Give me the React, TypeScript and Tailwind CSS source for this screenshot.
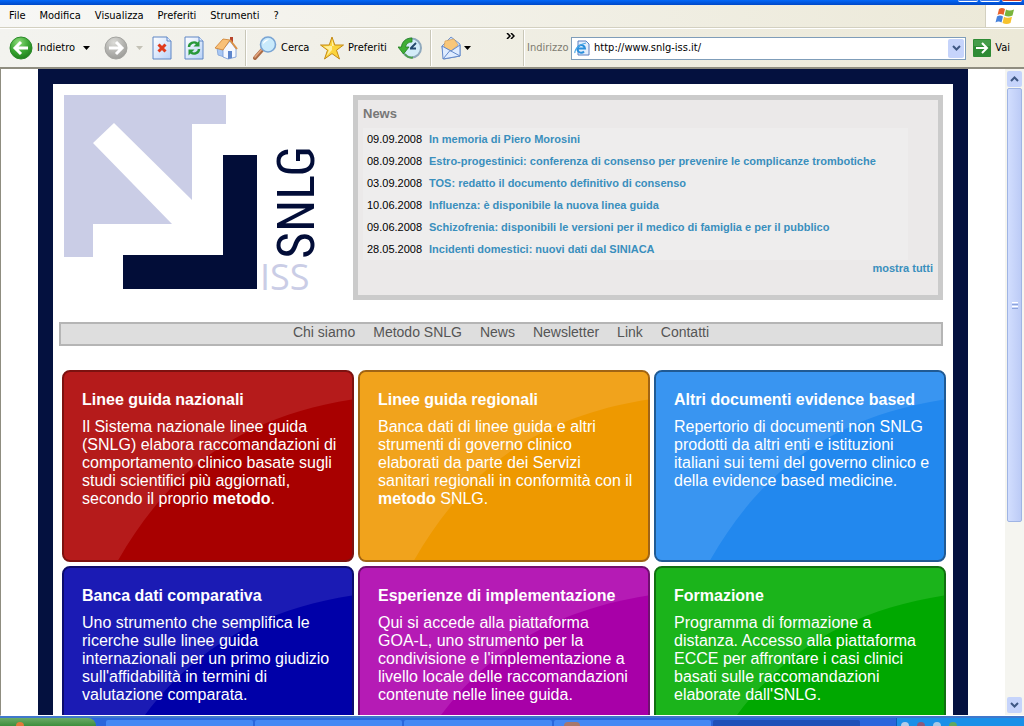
import type { ReactNode } from "react";

const menu = ["File", "Modifica", "Visualizza", "Preferiti", "Strumenti", "?"];

const news = [
  { date: "09.09.2008", title: "In memoria di Piero Morosini" },
  { date: "08.09.2008", title: "Estro-progestinici: conferenza di consenso per prevenire le complicanze trombotiche" },
  { date: "03.09.2008", title: "TOS: redatto il documento definitivo di consenso" },
  { date: "10.06.2008", title: "Influenza: è disponibile la nuova linea guida" },
  { date: "09.06.2008", title: "Schizofrenia: disponibili le versioni per il medico di famiglia e per il pubblico" },
  { date: "28.05.2008", title: "Incidenti domestici: nuovi dati dal SINIACA" },
];

const links = ["Chi siamo", "Metodo SNLG", "News", "Newsletter", "Link", "Contatti"];

const cards = [
  {
    title: "Linee guida nazionali",
    box: "bg-[#a80000] border-[#7c1210]",
    shine: "fill-[#b51b1b]",
    text: (
      <>
        Il Sistema nazionale linee guida<br />
        (SNLG) elabora raccomandazioni di<br />
        comportamento clinico basate sugli<br />
        studi scientifici più aggiornati,<br />
        secondo il proprio <a href="#" className="font-bold">metodo</a>.
      </>
    ),
  },
  {
    title: "Linee guida regionali",
    box: "bg-[#ee9900] border-[#a06414]",
    shine: "fill-[#f1a31c]",
    text: (
      <>
        Banca dati di linee guida e altri<br />
        strumenti di governo clinico<br />
        elaborati da parte dei Servizi<br />
        sanitari regionali in conformità con il<br />
        <a href="#" className="font-bold">metodo</a> SNLG.
      </>
    ),
  },
  {
    title: "Altri documenti evidence based",
    box: "bg-[#2288ee] border-[#205a94]",
    shine: "fill-[#3995f1]",
    text: (
      <>
        Repertorio di documenti non SNLG<br />
        prodotti da altri enti e istituzioni<br />
        italiani sui temi del governo clinico e<br />
        della evidence based medicine.
      </>
    ),
  },
  {
    title: "Banca dati comparativa",
    box: "bg-[#0000a8] border-[#0c0c6c]",
    shine: "fill-[#1b1bb4]",
    text: (
      <>
        Uno strumento che semplifica le<br />
        ricerche sulle linee guida<br />
        internazionali per un primo giudizio<br />
        sull'affidabilità in termini di<br />
        valutazione comparata.
      </>
    ),
  },
  {
    title: "Esperienze di implementazione",
    box: "bg-[#a800a8] border-[#701070]",
    shine: "fill-[#b51bb5]",
    text: (
      <>
        Qui si accede alla piattaforma<br />
        GOA-L, uno strumento per la<br />
        condivisione e l'implementazione a<br />
        livello locale delle raccomandazioni<br />
        contenute nelle linee guida.
      </>
    ),
  },
  {
    title: "Formazione",
    box: "bg-[#00a800] border-[#107010]",
    shine: "fill-[#1bb41b]",
    text: (
      <>
        Programma di formazione a<br />
        distanza. Accesso alla piattaforma<br />
        ECCE per affrontare i casi clinici<br />
        basati sulle raccomandazioni<br />
        elaborate dall'SNLG.
      </>
    ),
  },
];

function Caret({ className = "" }: { className?: string }) {
  return (
    <svg viewBox="0 0 7 4" className={`w-[7px] h-1 shrink-0 ${className}`}>
      <path d="M0 0h7L3.5 4z" fill="currentColor" />
    </svg>
  );
}

function RoundArrow({ forward = false }: { forward?: boolean }) {
  return (
    <svg viewBox="0 0 24 24" className="size-6 shrink-0">
      <defs>
        <radialGradient id={forward ? "fwd" : "back"} cx="0.4" cy="0.25" r="0.8">
          <stop offset="0" stopColor={forward ? "#dcdcd8" : "#8fdc7c"} />
          <stop offset="0.55" stopColor={forward ? "#b4b4b0" : "#3aa632"} />
          <stop offset="1" stopColor={forward ? "#9a9a96" : "#1c7a1a"} />
        </radialGradient>
      </defs>
      <circle cx="12" cy="12" r="11" fill={`url(#${forward ? "fwd" : "back"})`} stroke={forward ? "#a4a4a0" : "#2c8a2a"} />
      <path
        d={forward ? "M5 12h13M12 6l6 6-6 6" : "M19 12H6M12 6l-6 6 6 6"}
        fill="none"
        stroke="#fff"
        strokeWidth="3"
      />
    </svg>
  );
}

function Sheet({ children }: { children: ReactNode }) {
  return (
    <svg viewBox="0 0 20 24" className="w-5 h-6 shrink-0">
      <defs>
        <linearGradient id="sheet" x1="0" y1="0" x2="1" y2="1">
          <stop offset="0" stopColor="#fff" />
          <stop offset="1" stopColor="#b9d2f8" />
        </linearGradient>
      </defs>
      <path d="M1 1h14l4 4v18H1z" fill="url(#sheet)" stroke="#5f86c4" />
      <path d="M15 1v4h4" fill="#dce9ff" stroke="#5f86c4" />
      {children}
    </svg>
  );
}

function HomeIcon() {
  return (
    <svg viewBox="0 0 24 24" className="size-6 shrink-0">
      <path d="M16 1h3v6h-3z" fill="#b8452c" />
      <path d="M3 12l5-5 6 6v9l-10-3z" fill="#a9c8f4" stroke="#7d9fd6" strokeWidth="0.8" />
      <path d="M9 13l7-8 6 8v8l-8 2-5-2z" fill="#f4f8ff" stroke="#6f94d4" strokeWidth="0.8" />
      <path d="M9 3l7 1-7 10-8-2z" fill="#f8c078" stroke="#cd7d2c" strokeWidth="0.8" />
      <path d="M16 4l7 9" stroke="#dc9145" strokeWidth="2" />
      <path d="M14 15h4v7l-4 1z" fill="#5d86cc" />
    </svg>
  );
}

function SearchIcon() {
  return (
    <svg viewBox="0 0 24 24" className="size-6 shrink-0">
      <path d="M2 22l8-9" stroke="#ab6b45" strokeWidth="4" strokeLinecap="round" />
      <path d="M2 21l7-8" stroke="#e5a67f" strokeWidth="1.5" strokeLinecap="round" />
      <circle cx="15" cy="8.5" r="7.5" fill="#c9eafb" stroke="#79a4d3" strokeWidth="1.6" />
      <path d="M10 8c0-3 3-5 6-4.500-2 1-4 2.500-6 4.500z" fill="#fff" />
    </svg>
  );
}

function StarIcon() {
  return (
    <svg viewBox="0 0 24 24" className="size-6 shrink-0">
      <path d="M12 1l2.8 8h8.700l-7 5.200L19.500 23 12 17.600 4.500 23l3-8.800L.5 9h8.700z" fill="#fbd43c" stroke="#c48a16" />
      <path d="M12 3.500l1.900 6.600h-3.800L3.500 10.500l5.500 3.500-2.500 6L12 14z" fill="#fff0a0" />
    </svg>
  );
}

function HistoryIcon() {
  return (
    <svg viewBox="0 0 24 24" className="size-6 shrink-0">
      <circle cx="13.5" cy="12" r="9.5" fill="#d3ecf8" stroke="#8fa9bd" strokeWidth="2" />
      <path d="M13 12l5-5M12 12.500h6" stroke="#23496d" strokeWidth="1.8" />
      <path d="M0 11h3.500C4 5.500 8 2 14 2v4C10 6 8 8 7.500 11H11l-5.500 7z" fill="#3fae35" stroke="#227e20" strokeWidth="0.8" />
      <path d="M7 18c2 3 5 4 8 3.500" fill="none" stroke="#4ea04c" strokeWidth="2" />
    </svg>
  );
}

function MailIcon() {
  return (
    <svg viewBox="0 0 22 24" className="w-[22px] h-6 shrink-0">
      <path d="M2 10L11 1l9 7v12L4 23z" fill="#c8dcf8" stroke="#7193cc" />
      <path d="M5 5l9-2 4 6-7 6-7-4z" fill="#f8c77a" stroke="#d59a4c" strokeWidth="0.6" />
      <path d="M2 10l9 5 9-6v11L3 23z" fill="#dfecff" stroke="#6389ca" />
      <path d="M3 23l7-8.500L20 20" fill="none" stroke="#6389ca" />
    </svg>
  );
}

function PageIcon() {
  return (
    <svg viewBox="0 0 16 16" className="size-4 shrink-0">
      <path d="M4 1h8l3 3v11H4z" fill="#e4eefc" stroke="#5a7fc0" />
      <path d="M4 8.500h7A3.800 3.800 0 1 0 10 11.500" fill="none" stroke="#2a8fdc" strokeWidth="2" />
      <path d="M1 13C0 10 5 4 12 3" fill="none" stroke="#4aa6e6" strokeWidth="1.2" />
    </svg>
  );
}

function WindowsFlag() {
  return (
    <svg viewBox="0 0 20 18" className="w-5 h-[18px]">
      <path d="M4 2c2-1.500 4-1.300 6 0L8.500 8c-2-1.300-4-1.300-6 0z" fill="#e8622c" />
      <path d="M11 2.500c2 1.200 5 1.200 8 0L17.500 8.500c-3 1.300-5 1.200-8 0z" fill="#79b43c" />
      <path d="M2 9.500c2-1.400 4-1.300 6 0L6.500 15.500c-2-1.300-4-1.300-6 0z" fill="#4682dc" />
      <path d="M9 9.800c2 1.300 5 1.300 8 0L15.500 16c-3 1.300-5 1.200-8 0z" fill="#f6c22e" />
    </svg>
  );
}

function Chevron({ up = false }: { up?: boolean }) {
  return (
    <svg viewBox="0 0 9 6" className="w-[9px] h-1.5">
      <path d={up ? "M1 5l3.500-3.500L8 5" : "M1 1l3.500 3.500L8 1"} fill="none" stroke="#3f5884" strokeWidth="2" />
    </svg>
  );
}

function Divider() {
  return <div className="w-0.5 h-9 shrink-0 border-l border-[#c9c7b8] bg-white" />;
}

function Toolbar() {
  return (
    <div className="h-[41px] shrink-0 flex items-center bg-linear-to-r from-[#f3f3ef] to-[#ece9d8] border-t border-white border-b-2 border-b-[#8f8d80] pl-[9px] pr-3.5">
      <button className="flex items-center gap-1">
        <RoundArrow />
        Indietro
      </button>
      <button aria-label="Cronologia indietro" className="pl-2 w-[29px]"><Caret /></button>
      <button aria-label="Avanti" className="flex items-center gap-2 w-12 text-[#c4c2b6]">
        <RoundArrow forward />
        <Caret />
      </button>
      <button aria-label="Termina" className="w-8">
        <Sheet><path d="M6.500 8.500l7 7m0-7l-7 7" stroke="#e03a1c" strokeWidth="3" /></Sheet>
      </button>
      <button aria-label="Aggiorna" className="w-[30px]">
        <Sheet>
          <path d="M5 11c0-4 5-6 8-3.500" fill="none" stroke="#28983a" strokeWidth="2.4" />
          <path d="M15.500 4.500v6h-6z" fill="#28983a" />
          <path d="M15 13c0 4-5 6-8 3.500" fill="none" stroke="#28983a" strokeWidth="2.4" />
          <path d="M4.500 19.500v-6h6z" fill="#28983a" />
        </Sheet>
      </button>
      <button aria-label="Pagina iniziale" className="w-[31px]"><HomeIcon /></button>
      <Divider />
      <button className="flex items-center gap-1 pl-1.5 w-[73px]"><SearchIcon />Cerca</button>
      <button className="flex items-center gap-1 w-[78px]"><StarIcon />Preferiti</button>
      <button aria-label="Cronologia" className="w-8"><HistoryIcon /></button>
      <Divider />
      <button aria-label="Posta" className="flex items-center gap-0.5 pl-2 w-[74px]"><MailIcon /><Caret /></button>
      <button aria-label="Altri pulsanti" className="self-start pt-1 w-[17px]">
        <svg viewBox="0 0 9 6" className="w-[9px] h-1.5">
          <path d="M1 0l3 3-3 3M5 0l3 3-3 3" fill="none" stroke="#000" strokeWidth="1.5" />
        </svg>
      </button>
      <Divider />
      <label htmlFor="address" className="text-[#7d7b70] pl-0.5 w-[46px]">Indirizzo</label>
      <div className="flex-1 flex items-center h-[23px] bg-white border border-[#7f9db9] pl-0.5 pr-px gap-1">
        <PageIcon />
        <input id="address" defaultValue="http://www.snlg-iss.it/" className="flex-1 min-w-0 outline-none" />
        <button aria-label="Apri elenco indirizzi" className="w-4 h-[19px] rounded-xs bg-[#c6d4fb] flex items-center justify-center">
          <Chevron />
        </button>
      </div>
      <button className="flex items-center gap-1 pl-[7px]">
        <svg viewBox="0 0 18 18" className="size-[18px]">
          <rect width="18" height="18" rx="1" fill="#2e8b35" />
          <path d="M1 1h16v6H1z" fill="#55a858" opacity="0.6" />
          <path d="M3 9h11M9 4l5 5-5 5" fill="none" stroke="#fff" strokeWidth="2" />
        </svg>
        Vai
      </button>
    </div>
  );
}

function Logo() {
  return (
    <svg viewBox="0 0 252 196" role="img" aria-label="SNLG ISS" className="w-[252px] h-[196px] shrink-0 overflow-visible">
      <path d="M0 0h162v29h-34v76L50 28 29 48l79 81H29v33H0z" fill="#cacde6" />
      <path d="M159 60h34v134H59v-34h100z" fill="#020d38" />
      <text
        transform="translate(250 164) rotate(-90)"
        fill="#020d38"
        className="text-[52px] font-[Roboto_Condensed,Liberation_Sans_Narrow,Liberation_Sans,sans-serif]"
      >
        SNLG
      </text>
      <text x="196" y="195" fill="#cacde6" className="text-[36px] font-medium font-[Open_Sans,sans-serif]">ISS</text>
    </svg>
  );
}

function NewsBox() {
  return (
    <section className="flex-1 h-[205px] bg-[#ebe9e9] border-5 border-[#cbcbcb] px-[5px] pt-1.5">
      <h2 className="text-[13px] leading-4 font-bold text-[#777]">News</h2>
      <table className="mt-1.5 w-[545px] max-w-full text-[11px] bg-[#eeeded]">
        <tbody>
          {news.map((item) => (
            <tr key={item.title} className="h-[22px]">
              <td className="pl-1 w-[66px] text-black">{item.date}</td>
              <td className="whitespace-nowrap">
                <a href="#" className="font-bold text-[#3a8fbd]">{item.title}</a>
              </td>
            </tr>
          ))}
        </tbody>
      </table>
      <a href="#" className="block text-right text-[11px] leading-4 font-bold text-[#3a8fbd]">mostra tutti</a>
    </section>
  );
}

function Scrollbar() {
  return (
    <div className="w-[19px] shrink-0 flex flex-col items-center py-0.5 bg-[#f5f5f0]">
      <button aria-label="Su" className="w-[15px] h-4 rounded-xs bg-[#c6d4fb] flex items-center justify-center">
        <Chevron up />
      </button>
      <div className="w-[15px] h-[434px] mt-px rounded-xs bg-linear-to-r from-[#d2defe] to-[#bccbf6] border border-[#9fb4e4] flex flex-col items-center justify-center gap-px">
        <div className="w-1.5 h-px bg-white" />
        <div className="w-1.5 h-px bg-[#8ca4dc]" />
        <div className="w-1.5 h-px bg-white" />
        <div className="w-1.5 h-px bg-[#8ca4dc]" />
      </div>
      <button aria-label="Giù" className="mt-auto w-[15px] h-4 rounded-xs bg-[#c6d4fb] flex items-center justify-center">
        <Chevron />
      </button>
    </div>
  );
}

function Taskbar() {
  return (
    <div className="h-2.5 shrink-0 flex items-end bg-[#2a66dc] border-t-2 border-[#3f78cc]">
      <div className="w-24 h-full bg-linear-to-b from-[#6bab66] to-[#3c8e3c] rounded-tr-lg flex items-end pl-4">
        <div className="w-2 h-1 bg-[#e07a3a] rounded-t-sm" />
      </div>
      <div className="flex-1 flex h-1.5 gap-0.5 pl-2.5 pr-9">
        <div className="flex-1 bg-[#4488f4] rounded-t-xs" />
        <div className="flex-1 bg-[#4488f4] rounded-t-xs" />
        <div className="flex-1 bg-[#4488f4] rounded-t-xs" />
        <div className="flex-1 bg-[#4488f4] rounded-t-xs flex items-end pl-2.5">
          <div className="w-4 h-1 bg-[#a8786c] rounded-t-sm" />
        </div>
        <div className="flex-1 bg-[#1e50b8] rounded-t-xs" />
      </div>
      <div className="w-32 h-full bg-[#1a90e8] border-l border-[#0e5cb4] flex items-end gap-2 pl-1">
        <div className="w-2 h-1 bg-[#b4cce8] rounded-t-sm" />
        <div className="w-2 h-1 bg-[#8c5a7c] rounded-t-sm" />
        <div className="w-2 h-1 bg-[#a8c8e4] rounded-t-sm" />
        <div className="w-2 h-1 bg-[#5fa860] rounded-t-sm" />
      </div>
    </div>
  );
}

function App() {
  return (
    <div className="h-screen flex flex-col overflow-hidden bg-white text-[11px] text-black font-[DejaVu_Sans_Condensed,Noto_Sans,sans-serif]">
      <div className="h-[5px] shrink-0 flex justify-end items-start gap-0.5 pr-0.5 bg-linear-to-b from-[#0468f8] to-[#0048c8]">
        <div className="w-5 h-0.5 bg-[#3c78e8] border-b border-white rounded-b-sm" />
        <div className="w-5 h-0.5 bg-[#3c78e8] border-b border-white rounded-b-sm" />
        <div className="w-5 h-0.5 bg-[#c83c28] border-b border-white rounded-b-sm" />
      </div>
      <div className="h-[23px] shrink-0 flex bg-linear-to-r from-[#f7f7f5] to-[#ece9d8] border-b border-[#d3d0c0]">
        <nav className="flex-1 flex items-center gap-3.5 pl-[9px]">
          {menu.map((item) => (
            <button key={item}>{item}</button>
          ))}
        </nav>
        <div className="w-[39px] flex items-center justify-center bg-white border-l border-[#d3d0c0]">
          <WindowsFlag />
        </div>
      </div>
      <Toolbar />

      <div className="flex-1 min-h-0 flex border-l border-b border-l-[#8f8d80] border-b-white font-[Liberation_Sans,Arial,sans-serif]">
        <div className="flex-1 overflow-hidden">
          <main className="max-w-[930px] mx-auto border-[15px] border-[#04113f] bg-white">
            <header className="flex gap-[37px] pt-[11px] pl-[11px] pr-2.5">
              <Logo />
              <NewsBox />
            </header>

            <nav className="mt-[22px] ml-1.5 mr-2.5 h-6 flex justify-center gap-[18px] bg-[#dedede] border-2 border-[#b5b5b5] text-sm leading-4 text-[#555]">
              {links.map((link) => (
                <a key={link} href="#">{link}</a>
              ))}
            </nav>

            <div className="mt-6 ml-[9px] mr-[7px] grid grid-cols-3 gap-1">
              {cards.map((card) => (
                <article key={card.title} className={`relative h-48 overflow-hidden rounded-lg border-2 text-white ${card.box}`}>
                  <svg viewBox="0 0 292 192" preserveAspectRatio="none" className="absolute inset-0 size-full">
                    <path d="M0 0h292v28C185 45 110 95 55 192H0z" className={card.shine} />
                  </svg>
                  <div className="relative pt-[19px] pl-[18px] pr-1 text-base leading-[18px]">
                    <h3 className="font-bold">{card.title}</h3>
                    <p className="mt-[9px]">{card.text}</p>
                  </div>
                </article>
              ))}
            </div>
          </main>
        </div>
        <Scrollbar />
      </div>
      <Taskbar />
    </div>
  );
}

export default App;
